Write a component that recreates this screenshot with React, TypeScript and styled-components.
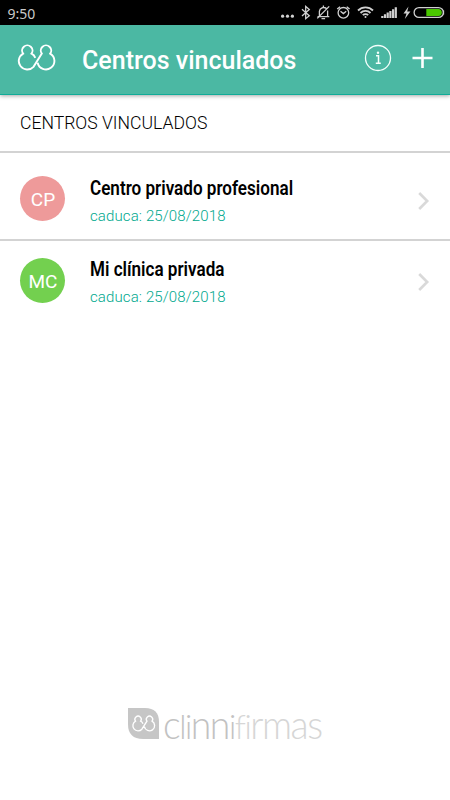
import React from 'react';
import styled, { createGlobalStyle } from 'styled-components';

const Global = createGlobalStyle`
  * { box-sizing: border-box; }
  body { margin: 0; background: #fff; font-family: Roboto, "Liberation Sans", sans-serif; }
`;

const Screen = styled.div`
  width: 450px;
  height: 800px;
  display: flex;
  flex-direction: column;
  overflow: hidden;
  background: #fff;
`;

const StatusBar = styled.div`
  height: 25px;
  flex: none;
  display: flex;
  justify-content: space-between;
  padding-left: 7.5px;
  background: #000;
  color: #c9c9c9;
  font-family: "Noto Sans", sans-serif;
  font-size: 14px;
  line-height: 27px;
`;

const Header = styled.header`
  height: 70px;
  flex: none;
  display: flex;
  align-items: flex-start;
  background: #4bb8a3;
  border-bottom: 1px solid #10ac98;
  box-shadow: 0 1px 4px rgba(0, 0, 0, 0.35);
`;

const BrandMark = styled.svg`
  margin: 19px 0 0 17px;
  flex: none;
`;

const Title = styled.h1`
  margin: 21px 0 0 25px;
  flex: 1;
  color: #fff;
  font-size: 25px;
  line-height: 30px;
  font-weight: 500;
  white-space: nowrap;
`;

const HeaderIcon = styled.svg<{ $right: number }>`
  flex: none;
  margin: 19px ${(p) => p.$right}px 0 0;
`;

const SectionTitle = styled.h2`
  margin: 0;
  height: 58px;
  flex: none;
  padding: 17px 0 0 20px;
  border-bottom: 2px solid #d3d3d3;
  color: #000;
  font-size: 17.6px;
  font-weight: 340;
  line-height: 22px;
`;

const Row = styled.div<{ $height: number; $top: number; $divider?: boolean }>`
  height: ${(p) => p.$height}px;
  flex: none;
  display: flex;
  align-items: flex-start;
  padding: ${(p) => p.$top}px 20px 0 20px;
  border-bottom: ${(p) => (p.$divider ? '2px solid #d3d3d3' : 'none')};
`;

const Avatar = styled.div<{ $color: string }>`
  width: 45px;
  height: 45px;
  flex: none;
  padding-left: 1px;
  border-radius: 50%;
  background: ${(p) => p.$color};
  color: #fff;
  font-size: 19px;
  font-weight: 450;
  line-height: 47px;
  text-align: center;
`;

const RowText = styled.div<{ $shift: number }>`
  flex: 1;
  margin-left: 25px;
  padding-top: ${(p) => p.$shift}px;
`;

const Name = styled.div`
  width: max-content;
  color: #000;
  font-size: 19.5px;
  font-weight: 650;
  line-height: 24px;
  transform: scaleX(0.876);
  transform-origin: left center;
`;

const Expiry = styled.div`
  margin-top: 5px;
  color: #00a88e;
  font-size: 15px;
  font-weight: 320;
  line-height: 20px;
  letter-spacing: 0.12px;
`;

const Chevron = styled.svg<{ $top: number }>`
  flex: none;
  margin-top: ${(p) => p.$top}px;
`;

const Footer = styled.footer`
  margin-top: auto;
  height: 93px;
  flex: none;
  display: flex;
  align-items: flex-start;
  padding-left: 128px;
`;

const FooterBadge = styled.svg`
  flex: none;
  margin-top: 1px;
`;

const Wordmark = styled.div`
  margin: -2px 0 0 3px;
  color: #c2c2c2;
  font-family: Lato, sans-serif;
  font-size: 39px;
  font-weight: 300;
  line-height: 38px;
  letter-spacing: -1.5px;
  width: max-content;
  transform: scaleX(0.957);
  transform-origin: left center;
`;

const WordmarkTail = styled.span`
  color: #d6d6d6;
`;

const Tall = styled.span`
  font-size: 34px;
  line-height: 1;
`;

const LoopPath = () => (
  <path d="M18.3 13.8C17.6 11.9 16.3 10.4 14.5 9.6A5.2 5.2 0 1 0 6.1 9.6A8.5 8.5 0 1 0 16.5 22.8L24.8 9.6A5.2 5.2 0 1 1 33.2 9.6A8.5 8.5 0 1 1 20.6 18.7" />
);

const rows = [
  { initials: 'CP', color: '#ee9a9a', name: 'Centro privado profesional', height: 88, top: 23, shift: 1, chevron: 16, divider: true },
  { initials: 'MC', color: '#73d04f', name: 'Mi clínica privada', height: 90, top: 17, shift: 0, chevron: 15, divider: false },
];

const StatusIcons = () => (
  <svg width="170" height="25" viewBox="280 0 170 25" fill="none" stroke="#d0d0d0" strokeWidth="1.3">
    <g fill="#d0d0d0" stroke="none">
      <circle cx="282.6" cy="16.2" r="1.6" />
      <circle cx="287.5" cy="16.2" r="1.6" />
      <circle cx="292.4" cy="16.2" r="1.6" />
    </g>
    <path d="M302 9.2l7.3 6.5-3.6 3V6.4l3.6 3-7.3 6.6" />
    <path d="M317.5 16.6h11.8M319.4 16.4V11.4a4.2 4.2 0 0 1 7-2.8M327.6 10.5v6M321.5 18.6h3.6M329.2 6.4L317.3 18.4M323.4 5.6v1.6" />
    <circle cx="343.4" cy="12.8" r="5.3" />
    <path d="M340.5 11.2l2.9 2.4 2.8-2.4M337.2 9l2.9-2.3M346.7 6.7L349.6 9" />
    <g strokeWidth="1.8">
      <path d="M358 10.5a10.5 10.5 0 0 1 15 0M360.5 13a7 7 0 0 1 10 0M362.8 15.2a3.8 3.8 0 0 1 5.4 0" />
      <circle cx="365.5" cy="17" r="1" fill="#d0d0d0" stroke="none" />
    </g>
    <g strokeWidth="2.2">
      <path d="M382.3 18v-2M385 18v-3.7M387.7 18v-5.4M390.4 18v-7.1M393.1 18V9.2M395.8 18V7.3" />
    </g>
    <path d="M408.5 6.5l-5 7h3l-1.7 5.5 5.6-7.4h-3.2z" fill="#d0d0d0" stroke="none" />
    <path d="M419 7.6h19.5a4.9 4.9 0 0 1 0 9.8H419a4.9 4.9 0 0 1 0-9.8z" />
    <path d="M426.3 9h12a3.5 3.5 0 0 1 0 7h-12z" fill="#4ac800" stroke="none" />
    <path d="M443.5 10.5v4" />
  </svg>
);

export default function App() {
  return (
    <Screen>
      <Global />
      <StatusBar>
        <span>9:50</span>
        <StatusIcons />
      </StatusBar>
      <Header>
        <BrandMark width="40" height="27" viewBox="0 0 40 27" fill="none" stroke="#fff" strokeWidth="1.9">
          <LoopPath />
        </BrandMark>
        <Title>Centros vinculados</Title>
        <HeaderIcon $right={20} width="28" height="28" viewBox="0 0 28 28" fill="none" stroke="#f4fffc">
          <circle cx="14" cy="14" r="12.5" strokeWidth="1.3" />
          <path d="M12 11.7h2.5v7.2M11.8 19.3h5" strokeWidth="1.5" />
          <circle cx="14" cy="8.8" r="1.2" fill="#f4fffc" stroke="none" />
        </HeaderIcon>
        <HeaderIcon $right={17} width="21" height="28" viewBox="0 0 21 28" stroke="#fff" strokeWidth="2.6">
          <path d="M10.5 4v20M.5 14h20" />
        </HeaderIcon>
      </Header>
      <SectionTitle>CENTROS VINCULADOS</SectionTitle>
      {rows.map((row) => (
        <Row key={row.initials} $height={row.height} $top={row.top} $divider={row.divider}>
          <Avatar $color={row.color}>{row.initials}</Avatar>
          <RowText $shift={row.shift}>
            <Name>{row.name}</Name>
            <Expiry>caduca: 25/08/2018</Expiry>
          </RowText>
          <Chevron $top={row.chevron} width="14" height="18" viewBox="0 0 14 18" fill="none" stroke="#d9d9d9" strokeWidth="2.6">
            <path d="M3.2 1l8 8-8 8" />
          </Chevron>
        </Row>
      ))}
      <Footer>
        <FooterBadge width="32" height="31" viewBox="0 0 32 31">
          <path d="M0 0h17Q31 0 31 14v17H15Q0 31 0 16z" fill="#c6c6c6" />
          <g transform="translate(3.8 7.3) scale(.61)" fill="none" stroke="#fff" strokeWidth="2.2">
            <LoopPath />
          </g>
        </FooterBadge>
        <Wordmark>
          c<Tall>li</Tall>nn<Tall>i</Tall>
          <WordmarkTail>
            <Tall>fi</Tall>rmas
          </WordmarkTail>
        </Wordmark>
      </Footer>
    </Screen>
  );
}
